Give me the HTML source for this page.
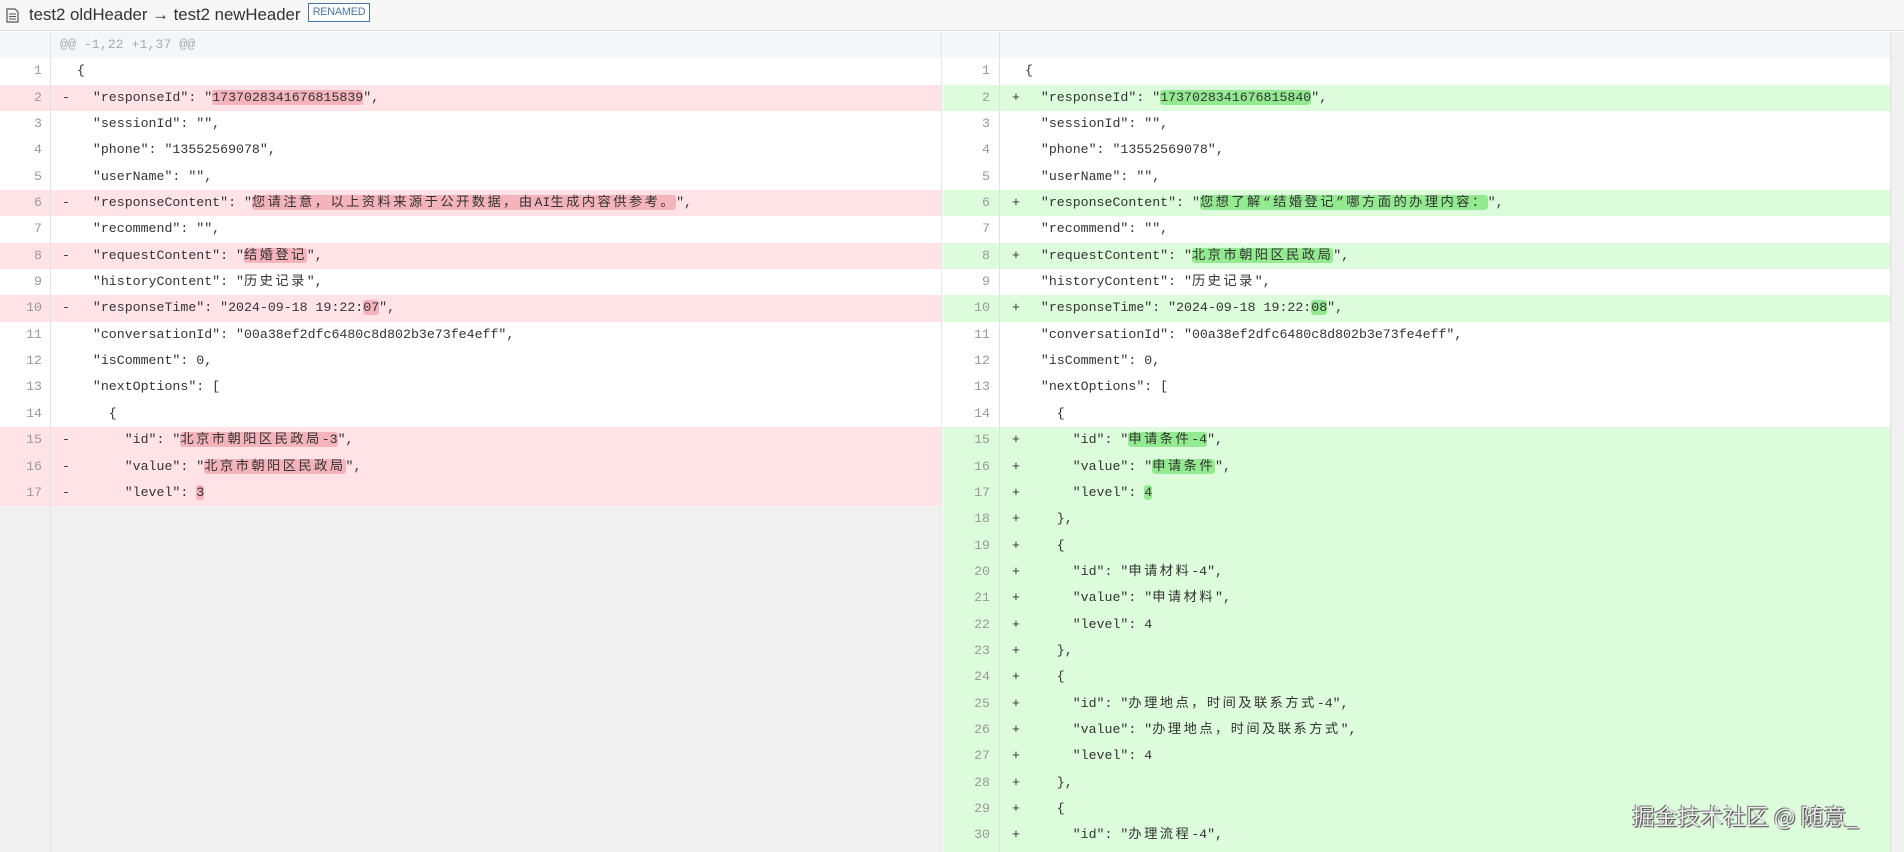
<!DOCTYPE html>
<html><head><meta charset="utf-8"><style>
*{margin:0;padding:0;box-sizing:border-box}
body{width:1904px;height:852px;overflow:hidden;background:#fff;font-family:"Liberation Sans","Noto Sans CJK SC",sans-serif;position:relative}
.hdr{position:absolute;left:0;top:0;width:1904px;height:31px;background:#f7f7f7;border-bottom:1px solid #ddd}
.hdr .t{position:absolute;left:29px;top:5px;font-size:16.8px;color:#333}
.badge{position:absolute;left:308px;top:3px;height:19px;width:62px;border:1px solid #4a75a3;color:#4a75a3;font-size:10.8px;line-height:17px;text-align:center;background:#fff;letter-spacing:-0.2px;white-space:nowrap}
.pane{position:absolute;top:32px;bottom:0;overflow:hidden}
#L{left:0;width:942px;background:#f0f0f0;border-right:1px solid #e4e4e4}
#R{left:943px;width:947px;background:#dcfcdc}
.sb{position:absolute;left:1890px;top:32px;width:14px;bottom:0;background:#f0f0f0;border-left:1px solid #e0e0e0}
.row{position:relative;height:26.35px;line-height:26.35px;font-family:"Liberation Mono","Noto Sans CJK SC",monospace;font-size:13.25px;color:#333;white-space:pre}
.n{position:absolute;left:0;top:0;bottom:0;text-align:right;color:#999;border-right:1px solid #e2e2e2}
#L .n{width:51px;padding-right:8px}
#R .n{width:57px;padding-right:9px}
.m{position:absolute;top:0}
#L .m{left:62px}#R .m{left:69px}
.c{position:absolute;top:0}
#L .c{left:77px}#R .c{left:82px}
.w{background:#fff}
.d{background:#ffe3e6}
.a{background:#dcfcdc}
.hd{background:#f4f6fa;color:#aaa}
.hx{background:#f5b3bc;border-radius:3px}
.ha{background:#94ea90;border-radius:3px}
.k{letter-spacing:2.45px}
.wm{position:absolute;left:1632px;top:799px;font-size:22.8px;color:#eee;text-shadow:1px 1px 1px #444,-1px -1px 0 #777;font-family:"Noto Sans CJK SC",sans-serif}
</style></head><body>
<div class="hdr">
<svg style="position:absolute;left:6px;top:8px" width="13" height="15" viewBox="0 0 13 15"><path d="M1 1h8l3 3v10H1z" fill="none" stroke="#555" stroke-width="1.2"/><path d="M3 6h7M3 8.5h7M3 11h7" stroke="#555"/></svg>
<span class="t">test2 oldHeader → test2 newHeader</span><span class="badge">RENAMED</span></div>
<div class="pane" id="L">
<div class="row hd"><span class="n"></span><span class="c" style="left:60px">@@ -1,22 +1,37 @@</span></div>
<div class="row w"><span class="n">1</span><span class="c">{</span></div>
<div class="row d"><span class="n">2</span><span class="m">-</span><span class="c">  "responseId": "<span class="hx">1737028341676815839</span>",</span></div>
<div class="row w"><span class="n">3</span><span class="c">  "sessionId": "",</span></div>
<div class="row w"><span class="n">4</span><span class="c">  "phone": "13552569078",</span></div>
<div class="row w"><span class="n">5</span><span class="c">  "userName": "",</span></div>
<div class="row d"><span class="n">6</span><span class="m">-</span><span class="c">  "responseContent": "<span class="hx"><span class="k">您请注意，以上资料来源于公开数据，由</span>AI<span class="k">生成内容供参考。</span></span>",</span></div>
<div class="row w"><span class="n">7</span><span class="c">  "recommend": "",</span></div>
<div class="row d"><span class="n">8</span><span class="m">-</span><span class="c">  "requestContent": "<span class="hx k">结婚登记</span>",</span></div>
<div class="row w"><span class="n">9</span><span class="c">  "historyContent": "<span class="k">历史记录</span>",</span></div>
<div class="row d"><span class="n">10</span><span class="m">-</span><span class="c">  "responseTime": "2024-09-18 19:22:<span class="hx">07</span>",</span></div>
<div class="row w"><span class="n">11</span><span class="c">  "conversationId": "00a38ef2dfc6480c8d802b3e73fe4eff",</span></div>
<div class="row w"><span class="n">12</span><span class="c">  "isComment": 0,</span></div>
<div class="row w"><span class="n">13</span><span class="c">  "nextOptions": [</span></div>
<div class="row w"><span class="n">14</span><span class="c">    {</span></div>
<div class="row d"><span class="n">15</span><span class="m">-</span><span class="c">      "id": "<span class="hx"><span class="k">北京市朝阳区民政局</span>-3</span>",</span></div>
<div class="row d"><span class="n">16</span><span class="m">-</span><span class="c">      "value": "<span class="hx k">北京市朝阳区民政局</span>",</span></div>
<div class="row d"><span class="n">17</span><span class="m">-</span><span class="c">      "level": <span class="hx">3</span></span></div>
<div style="position:absolute;left:0;top:474px;bottom:0;width:51px;border-right:1px solid #e2e2e2"></div>
</div>
<div class="pane" id="R">
<div class="row hd"><span class="n"></span></div>
<div class="row w"><span class="n">1</span><span class="c">{</span></div>
<div class="row a"><span class="n">2</span><span class="m">+</span><span class="c">  "responseId": "<span class="ha">1737028341676815840</span>",</span></div>
<div class="row w"><span class="n">3</span><span class="c">  "sessionId": "",</span></div>
<div class="row w"><span class="n">4</span><span class="c">  "phone": "13552569078",</span></div>
<div class="row w"><span class="n">5</span><span class="c">  "userName": "",</span></div>
<div class="row a"><span class="n">6</span><span class="m">+</span><span class="c">  "responseContent": "<span class="ha k">您想了解“结婚登记”哪方面的办理内容：</span>",</span></div>
<div class="row w"><span class="n">7</span><span class="c">  "recommend": "",</span></div>
<div class="row a"><span class="n">8</span><span class="m">+</span><span class="c">  "requestContent": "<span class="ha k">北京市朝阳区民政局</span>",</span></div>
<div class="row w"><span class="n">9</span><span class="c">  "historyContent": "<span class="k">历史记录</span>",</span></div>
<div class="row a"><span class="n">10</span><span class="m">+</span><span class="c">  "responseTime": "2024-09-18 19:22:<span class="ha">08</span>",</span></div>
<div class="row w"><span class="n">11</span><span class="c">  "conversationId": "00a38ef2dfc6480c8d802b3e73fe4eff",</span></div>
<div class="row w"><span class="n">12</span><span class="c">  "isComment": 0,</span></div>
<div class="row w"><span class="n">13</span><span class="c">  "nextOptions": [</span></div>
<div class="row w"><span class="n">14</span><span class="c">    {</span></div>
<div class="row a"><span class="n">15</span><span class="m">+</span><span class="c">      "id": "<span class="ha"><span class="k">申请条件</span>-4</span>",</span></div>
<div class="row a"><span class="n">16</span><span class="m">+</span><span class="c">      "value": "<span class="ha k">申请条件</span>",</span></div>
<div class="row a"><span class="n">17</span><span class="m">+</span><span class="c">      "level": <span class="ha">4</span></span></div>
<div class="row a"><span class="n">18</span><span class="m">+</span><span class="c">    },</span></div>
<div class="row a"><span class="n">19</span><span class="m">+</span><span class="c">    {</span></div>
<div class="row a"><span class="n">20</span><span class="m">+</span><span class="c">      "id": "<span class="k">申请材料</span>-4",</span></div>
<div class="row a"><span class="n">21</span><span class="m">+</span><span class="c">      "value": "<span class="k">申请材料</span>",</span></div>
<div class="row a"><span class="n">22</span><span class="m">+</span><span class="c">      "level": 4</span></div>
<div class="row a"><span class="n">23</span><span class="m">+</span><span class="c">    },</span></div>
<div class="row a"><span class="n">24</span><span class="m">+</span><span class="c">    {</span></div>
<div class="row a"><span class="n">25</span><span class="m">+</span><span class="c">      "id": "<span class="k">办理地点，时间及联系方式</span>-4",</span></div>
<div class="row a"><span class="n">26</span><span class="m">+</span><span class="c">      "value": "<span class="k">办理地点，时间及联系方式</span>",</span></div>
<div class="row a"><span class="n">27</span><span class="m">+</span><span class="c">      "level": 4</span></div>
<div class="row a"><span class="n">28</span><span class="m">+</span><span class="c">    },</span></div>
<div class="row a"><span class="n">29</span><span class="m">+</span><span class="c">    {</span></div>
<div class="row a"><span class="n">30</span><span class="m">+</span><span class="c">      "id": "<span class="k">办理流程</span>-4",</span></div>
<div class="row a"><span class="n">31</span><span class="m">+</span><span class="c"></span></div>
</div>
<div class="sb"></div>
<div class="wm">掘金技术社区 @ 随意_</div>
</body></html>
